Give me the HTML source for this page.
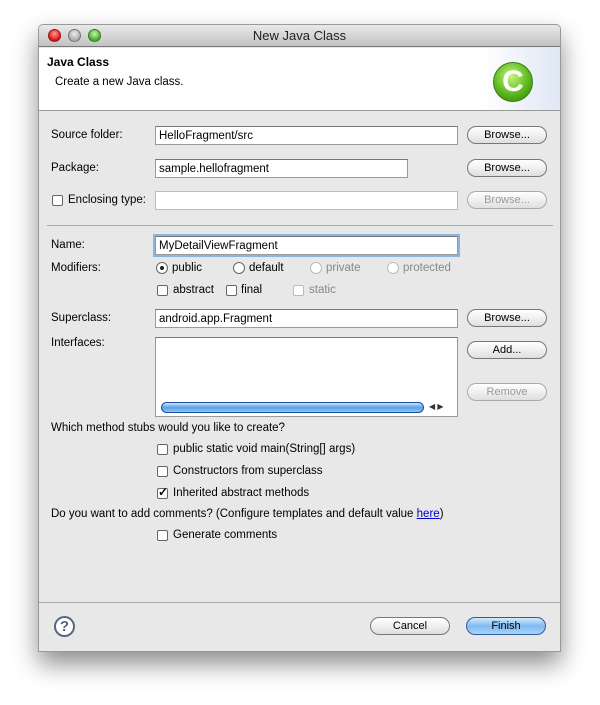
<!DOCTYPE html><html><head><style>
*{margin:0;padding:0;box-sizing:border-box}
body{width:600px;height:705px;background:#fff;font-family:"Liberation Sans",sans-serif;font-size:11.5px;color:#000;position:relative;overflow:hidden}
.win{position:absolute;left:38px;top:24px;width:523px;height:628px;background:#e8e8e8;border:1px solid #999;box-shadow:0 12px 25px rgba(0,0,0,.45);border-radius:5px 5px 0 0;overflow:hidden}
.a{position:absolute;white-space:nowrap}
.tb{position:absolute;left:0;top:0;width:100%;height:22px;background:linear-gradient(#e9e9e9,#c2c2c2);border-bottom:1px solid #777;text-align:center;font-size:13px;line-height:22px;color:#222}
.dot{position:absolute;top:4px;width:13px;height:13px;border-radius:50%;border:1px solid rgba(0,0,0,.35)}
.hd{position:absolute;left:0;top:23px;width:100%;height:63px;background:linear-gradient(90deg,#fff 85%,#dfe7f4);border-bottom:1px solid #999}
.f{position:absolute;background:#fff;border:1px solid #9a9a9a;border-top-color:#777;height:19px;padding-left:3px;line-height:19px}
.b{position:absolute;height:18px;width:80px;border:1px solid #777;border-radius:9px;background:linear-gradient(#fff,#f0f0f0 50%,#dedede);text-align:center;line-height:16px;font-size:11px}
.dis{color:#999;border-color:#aaa}
.cb{position:absolute;width:11px;height:11px;border:1px solid #666;border-radius:2px;background:#fff}
.rd{position:absolute;width:12px;height:12px;border:1px solid #666;border-radius:50%;background:#fff}
.g{color:#888}
</style></head><body>
<div class="win">
<div class="tb">New Java Class
<div class="dot" style="left:9px;background:radial-gradient(circle at 50% 35%,#ff9a9a,#d11 70%)"></div>
<div class="dot" style="left:29px;background:radial-gradient(circle at 50% 35%,#eee,#aaa 70%)"></div>
<div class="dot" style="left:49px;background:radial-gradient(circle at 50% 35%,#c8f5a0,#4a3 70%)"></div>
</div>
<div class="hd">
<div class="a" style="left:8px;top:7px;font-weight:bold;font-size:12px">Java Class</div>
<div class="a" style="left:16px;top:28px">Create a new Java class.</div>
<div class="a" style="left:454px;top:14px;width:40px;height:40px;border-radius:50%;background:radial-gradient(circle at 45% 35%,#c6f57e,#5cb81e 55%,#2d7a0c);border:1px solid #3b7d12;color:#fff;font-weight:bold;font-size:30px;line-height:38px;text-align:center">C</div>
</div>
<div class="a" style="left:12px;top:104px">Source folder:</div>
<div class="f" style="left:116px;top:101px;width:303px">HelloFragment/src</div>
<div class="b" style="left:428px;top:101px">Browse...</div>
<div class="a" style="left:12px;top:137px">Package:</div>
<div class="f" style="left:116px;top:134px;width:253px">sample.hellofragment</div>
<div class="b" style="left:428px;top:134px">Browse...</div>
<div class="cb" style="left:13px;top:170px"></div>
<div class="a" style="left:29px;top:169px">Enclosing type:</div>
<div class="f" style="left:116px;top:166px;width:303px;border-color:#bbb"></div>
<div class="b dis" style="left:428px;top:166px">Browse...</div>
<div class="a" style="left:8px;top:200px;width:506px;height:1px;background:#aaa"></div>
<div class="a" style="left:12px;top:214px">Name:</div>
<div class="f" style="left:116px;top:211px;width:303px;box-shadow:0 0 0 2px #8fb3e0">MyDetailViewFragment</div>
<div class="a" style="left:12px;top:237px">Modifiers:</div>
<div class="rd" style="left:117px;top:237px"><div style="position:absolute;left:3px;top:3px;width:4px;height:4px;border-radius:50%;background:#222"></div></div>
<div class="a" style="left:133px;top:237px">public</div>
<div class="rd" style="left:194px;top:237px"></div><div class="a" style="left:210px;top:237px">default</div>
<div class="rd" style="left:271px;top:237px;border-color:#bbb"></div><div class="a g" style="left:287px;top:237px">private</div>
<div class="rd" style="left:348px;top:237px;border-color:#bbb"></div><div class="a g" style="left:364px;top:237px">protected</div>
<div class="cb" style="left:118px;top:260px"></div><div class="a" style="left:134px;top:259px">abstract</div>
<div class="cb" style="left:187px;top:260px"></div><div class="a" style="left:202px;top:259px">final</div>
<div class="cb" style="left:254px;top:260px;border-color:#bbb"></div><div class="a g" style="left:270px;top:259px">static</div>
<div class="a" style="left:12px;top:287px">Superclass:</div>
<div class="f" style="left:116px;top:284px;width:303px">android.app.Fragment</div>
<div class="b" style="left:428px;top:284px">Browse...</div>
<div class="a" style="left:12px;top:312px">Interfaces:</div>
<div class="f" style="left:116px;top:312px;width:303px;height:80px"></div>
<div class="a" style="left:122px;top:377px;width:263px;height:11px;border-radius:6px;border:1px solid #1d4f9a;background:linear-gradient(#cfe6fb,#5aa0e8 50%,#8ec4f5)"></div>
<div class="a" style="left:390px;top:377px;font-size:8px;color:#333">◀ ▶</div>
<div class="b" style="left:428px;top:316px">Add...</div>
<div class="b dis" style="left:428px;top:358px">Remove</div>
<div class="a" style="left:12px;top:397px">Which method stubs would you like to create?</div>
<div class="cb" style="left:118px;top:419px"></div><div class="a" style="left:134px;top:418px">public static void main(String[] args)</div>
<div class="cb" style="left:118px;top:441px"></div><div class="a" style="left:134px;top:440px">Constructors from superclass</div>
<div class="cb" style="left:118px;top:463px"><div style="position:absolute;left:0;top:-4px;font-size:12px;font-weight:bold">✓</div></div><div class="a" style="left:134px;top:462px">Inherited abstract methods</div>
<div class="a" style="left:12px;top:483px">Do you want to add comments? (Configure templates and default value <span style="color:#00c;text-decoration:underline">here</span>)</div>
<div class="cb" style="left:118px;top:505px"></div><div class="a" style="left:134px;top:504px">Generate comments</div>
<div class="a" style="left:0;top:577px;width:100%;height:1px;background:#aaa"></div>
<div class="a" style="left:15px;top:591px;width:21px;height:21px;border-radius:50%;border:2px solid #56657f;text-align:center;font-weight:bold;font-size:15px;line-height:17px;color:#56657f;background:#fff">?</div>
<div class="b" style="left:331px;top:592px">Cancel</div>
<div class="b" style="left:427px;top:592px;border-color:#2e5e99;background:linear-gradient(#d5ebfd,#7fbaf0 50%,#a9d3f8)">Finish</div>
</div>
</body></html>
